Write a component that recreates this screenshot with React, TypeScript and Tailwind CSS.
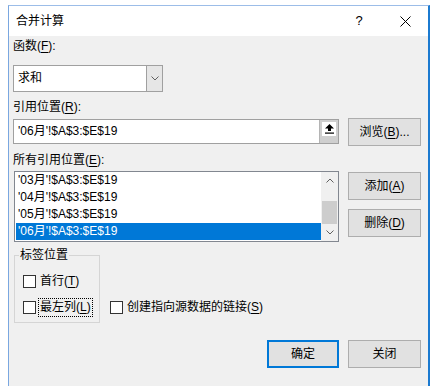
import React from 'react';

// 合并计算 — Excel consolidate dialog (Win10 style)

function U({ children }: { children: React.ReactNode }) {
  return <span className="underline underline-offset-[2px]">{children}</span>;
}

function Btn({
  children,
  primary = false,
}: {
  children: React.ReactNode;
  primary?: boolean;
}) {
  return (
    <button
      className={
        primary
          ? 'flex h-[28px] w-[72px] items-center justify-center border-2 border-[#0078d7] bg-[#e1e1e1] text-[12px] leading-none text-black'
          : 'flex h-[28px] w-[73px] items-center justify-center border border-[#adadad] bg-[#e1e1e1] text-[12px] leading-none text-black'
      }
    >
      {children}
    </button>
  );
}

function Check({ label, focus = false }: { label: React.ReactNode; focus?: boolean }) {
  return (
    <div className="flex h-[19px] items-center gap-[2px]">
      <span className="h-[13px] w-[13px] shrink-0 border border-[#333333] bg-white" />
      <span
        className={
          focus
            ? 'whitespace-nowrap border border-dotted border-black px-[1px] leading-[17px]'
            : 'whitespace-nowrap border border-transparent px-[1px] leading-[17px]'
        }
      >
        {label}
      </span>
    </div>
  );
}

function Chevron({ up = false }: { up?: boolean }) {
  return (
    <svg width="8" height="5" viewBox="0 0 8 5" className="block">
      <polyline
        points={up ? '0.5,4.5 4,1 7.5,4.5' : '0.5,0.5 4,4 7.5,0.5'}
        fill="none"
        stroke="#606060"
        strokeWidth="1"
      />
    </svg>
  );
}

const refs = ["'03月'!$A$3:$E$19", "'04月'!$A$3:$E$19", "'05月'!$A$3:$E$19", "'06月'!$A$3:$E$19"];

export default function App() {
  const selected = 3;

  return (
    <div className="h-[386px] w-[437px] overflow-hidden bg-white font-[family-name:Liberation_Sans,Noto_Sans_CJK_SC,sans-serif] text-[12px] text-black">
      <div className="ml-[8px] mt-[5px] flex h-[381px] w-[422px] flex-col border-l border-r-2 border-t border-l-[#7aa7e0] border-r-[#1b7ad0] border-t-[#9cbde8]">
        {/* 标题栏 */}
        <div className="flex h-[30px] shrink-0 items-center bg-white pl-[7px]">
          <span className="leading-[16px]">合并计算</span>
          <span className="ml-auto flex w-[46px] justify-center text-[13px]">?</span>
          <span className="flex w-[46px] justify-center">
            <svg width="11" height="11" viewBox="0 0 11 11">
              <path d="M0.5 0.5 L10.5 10.5 M10.5 0.5 L0.5 10.5" stroke="#000" strokeWidth="1" />
            </svg>
          </span>
        </div>

        {/* 内容 */}
        <div className="flex flex-1 flex-col bg-[#f0f0f0] pl-[4px] pr-[7px]">
          <div className="mt-[2px] h-[16px] leading-[16px]">
            函数(<U>F</U>):
          </div>
          <div className="mt-[11px] flex h-[27px] w-[150px] border border-[#a0a0a0] bg-white">
            <span className="flex-1 pl-[4px] leading-[25px]">求和</span>
            <span className="flex w-[16px] items-center justify-center border-l border-[#a0a0a0] bg-[#e6e6e6]">
              <Chevron />
            </span>
          </div>

          <div className="mt-[7px] h-[16px] leading-[16px]">
            引用位置(<U>R</U>):
          </div>
          <div className="mt-[2px] flex h-[29px] items-center">
            <div className="flex h-[25px] w-[326px] border border-[#a0a0a0] bg-white">
              <span className="flex-1 pl-[4px] leading-[23px]">'06月'!$A$3:$E$19</span>
              <span className="flex w-[19px] items-start justify-center border-l border-[#b4b4b4] bg-[#cfcfcf] pt-[2px]">
                <span className="flex h-[14px] w-[14px] items-center justify-center bg-white">
                  <svg width="9" height="10" viewBox="0 0 9 10">
                    <path d="M4.5 0 L0 4.5 L3 4.5 L3 7 L6 7 L6 4.5 L9 4.5 Z" fill="#000" />
                    <rect x="0" y="8.5" width="9" height="1.2" fill="#000" />
                  </svg>
                </span>
              </span>
            </div>
            <div className="ml-auto">
              <Btn>
                浏览(<U>B</U>)...
              </Btn>
            </div>
          </div>

          <div className="mt-[6px] h-[16px] leading-[16px]">
            所有引用位置(<U>E</U>):
          </div>
          <div className="mt-[3px] flex">
            <div className="ml-[1px] flex h-[71px] w-[325px] border border-[#828790] bg-white">
              <div className="flex-1 pl-[1px]">
                {refs.map((r, i) => (
                  <div
                    key={r}
                    className={
                      i === selected
                        ? 'h-[17px] bg-[#0078d7] pl-[2px] leading-[17px] text-white'
                        : 'h-[17px] pl-[2px] leading-[17px]'
                    }
                  >
                    {r}
                  </div>
                ))}
              </div>
              <div className="flex w-[17px] flex-col bg-[#f0f0f0]">
                <div className="flex h-[17px] items-center justify-center">
                  <Chevron up />
                </div>
                <div className="flex flex-1 flex-col justify-end px-[1px]">
                  <div className="h-[23px] bg-[#cdcdcd]" />
                </div>
                <div className="flex h-[17px] items-center justify-center">
                  <Chevron />
                </div>
              </div>
            </div>
            <div className="ml-auto flex flex-col gap-[9px] pt-[1px]">
              <Btn>
                添加(<U>A</U>)
              </Btn>
              <Btn>
                删除(<U>D</U>)
              </Btn>
            </div>
          </div>

          {/* 标签位置 */}
          <div className="mt-[13px] flex items-start">
            <div className="relative ml-[1px] flex w-[86px] flex-col gap-[7px] border border-[#d5d5d5] pb-[5px] pl-[8px] pt-[16px]">
              <span className="absolute -top-[9px] left-[4px] bg-[#f0f0f0] px-[1px] leading-[16px]">标签位置</span>
              <Check label={<>首行(<U>T</U>)</>} />
              <Check label={<>最左列(<U>L</U>)</>} focus />
            </div>
            <div className="ml-[10px] mt-[43px]">
              <Check label={<>创建指向源数据的链接(<U>S</U>)</>} />
            </div>
          </div>

          <div className="mt-[17px] flex justify-end gap-[9px]">
            <Btn primary>确定</Btn>
            <Btn>关闭</Btn>
          </div>
        </div>
      </div>
    </div>
  );
}
